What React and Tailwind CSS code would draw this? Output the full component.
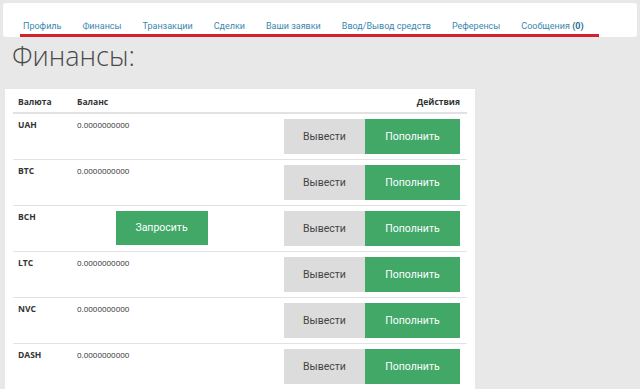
const navItems = [
    "Профиль",
    "Финансы",
    "Транзакции",
    "Сделки",
    "Ваши заявки",
    "Ввод/Вывод средств",
    "Референсы",
];

const rows = [
    { code: "UAH", balance: "0.0000000000" },
    { code: "BTC", balance: "0.0000000000" },
    { code: "BCH", request: true },
    { code: "LTC", balance: "0.0000000000" },
    { code: "NVC", balance: "0.0000000000" },
    { code: "DASH", balance: "0.0000000000" },
];

const font = { fontFamily: '"Open Sans", "Liberation Sans", sans-serif' };
const btnFont = { fontFamily: 'Roboto, "Open Sans", sans-serif' };

const Nav = () => (
    <div className="mx-[3px] pt-[3px]">
        <div className="h-[34px] bg-white rounded-[3px] pl-[17px] pt-[9px]" style={btnFont}>
            <ul className="inline-flex whitespace-nowrap gap-[21px] pl-[3px] pr-[15px] pb-[1px] border-b-[3px] border-[#d6202c] text-[9px] leading-[14px] text-[#3a87b0]">
                {navItems.map((item) => (
                    <li key={item} className="shrink-0">
                        <a href="#">{item}</a>
                    </li>
                ))}
                <li className="shrink-0">
                    <a href="#">
                        Сообщения <b className="font-bold text-[#2b6f91]">(0)</b>
                    </a>
                </li>
            </ul>
        </div>
    </div>
);

const Row = ({ row, first }) => (
    <div className={`flex ${first ? "h-[45px]" : "h-[46px] border-t border-[#e2e2e2]"}`}>
        <div className="w-[59px] pl-[5px] pt-[5px] text-[8.5px] leading-[12px] font-bold text-[#333]">
            {row.code}
        </div>
        <div className="w-[174px] pl-[5px] pt-[5px] text-[8px] leading-[12px] text-[#333]">
            {row.request ? (
                <div className="flex justify-center">
                    <button className="w-[92px] h-[34px] bg-[#41a868] text-white text-[10.5px]" style={btnFont}>
                        Запросить
                    </button>
                </div>
            ) : (
                row.balance
            )}
        </div>
        <div className="flex-1 flex justify-end items-start pt-[5px] pr-[7px]" style={btnFont}>
            <button className="w-[81px] h-[35px] bg-[#dcdcdc] text-[#444] text-[10.5px]">Вывести</button>
            <button className="w-[95px] h-[35px] bg-[#41a868] text-white text-[10.5px]">Пополнить</button>
        </div>
    </div>
);

export default function App() {
    return (
        <div className="min-h-[389px] bg-[#e8e8e8] overflow-hidden" style={font}>
            <Nav />
            <h1 className="pl-[12px] mt-[3px] text-[27px] leading-[32px] font-light text-[#4a4a4a]">Финансы:</h1>
            <div className="ml-[5px] mt-[17px] w-[470px] bg-white px-[8px]">
                <div className="flex h-[25px] pt-[7px] border-b-2 border-[#e2e2e2] text-[8.5px] leading-[12px] font-bold text-[#333]">
                    <div className="w-[59px] pl-[5px]">Валюта</div>
                    <div className="w-[174px] pl-[5px]">Баланс</div>
                    <div className="flex-1 text-right pr-[7px]">Действия</div>
                </div>
                {rows.map((row, i) => (
                    <Row key={row.code} row={row} first={i === 0} />
                ))}
            </div>
        </div>
    );
}
